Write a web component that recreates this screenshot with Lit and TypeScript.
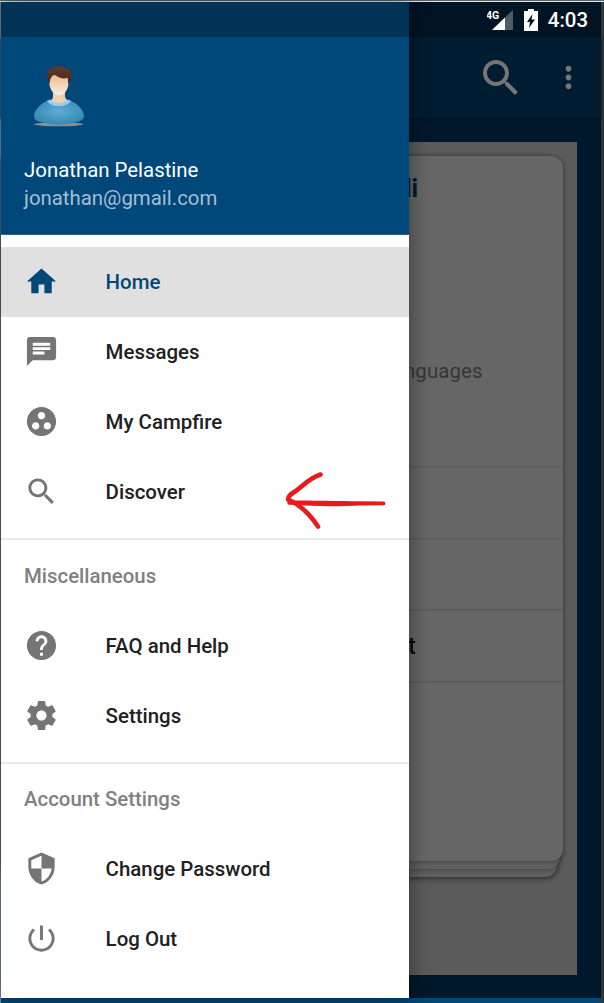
import { LitElement, html, css, svg } from "lit";
import { customElement, property } from "lit/decorators.js";

const ICONS: Record<string, string> = {
  home: "M10 20v-6h4v6h5v-8h3L12 3 2 12h3v8z",
  chat: "M20 2H4c-1.1 0-1.99.9-1.99 2L2 22l4-4h14c1.1 0 2-.9 2-2V4c0-1.1-.9-2-2-2zM6 9h12v2H6V9zm8 5H6v-2h8v2zm4-6H6V6h12v2z",
  group:
    "M12 2C6.48 2 2 6.48 2 12s4.48 10 10 10 10-4.48 10-10S17.52 2 12 2zM8 17.5c-1.38 0-2.5-1.12-2.5-2.5s1.12-2.5 2.5-2.5 2.5 1.12 2.5 2.5-1.12 2.5-2.5 2.5zM9.5 8c0-1.38 1.12-2.5 2.5-2.5s2.5 1.12 2.5 2.5-1.12 2.5-2.5 2.5S9.5 9.38 9.5 8zm6.5 9.5c-1.38 0-2.5-1.12-2.5-2.5s1.12-2.5 2.5-2.5 2.5 1.12 2.5 2.5-1.12 2.5-2.5 2.5z",
  search:
    "M15.5 14h-.79l-.28-.27C15.41 12.59 16 11.11 16 9.5 16 5.91 13.09 3 9.5 3S3 5.91 3 9.5 5.91 16 9.5 16c1.61 0 3.09-.59 4.23-1.57l.27.28v.79l5 4.99L20.49 19l-4.99-5zm-6 0C7.01 14 5 11.99 5 9.5S7.01 5 9.5 5 14 7.01 14 9.5 11.99 14 9.5 14z",
  help: "M12 2C6.48 2 2 6.48 2 12s4.48 10 10 10 10-4.48 10-10S17.52 2 12 2zm1 17h-2v-2h2v2zm2.07-7.75l-.9.92C13.45 12.9 13 13.5 13 15h-2v-.5c0-1.1.45-2.1 1.17-2.83l1.24-1.26c.37-.36.59-.86.59-1.41 0-1.1-.9-2-2-2s-2 .9-2 2H8c0-2.21 1.79-4 4-4s4 1.79 4 4c0 .88-.36 1.68-.93 2.25z",
  settings:
    "M19.43 12.98c.04-.32.07-.64.07-.98s-.03-.66-.07-.98l2.11-1.65c.19-.15.24-.42.12-.64l-2-3.46c-.12-.22-.39-.3-.61-.22l-2.49 1c-.52-.4-1.08-.73-1.69-.98l-.38-2.65C14.46 2.18 14.25 2 14 2h-4c-.25 0-.46.18-.49.42l-.38 2.65c-.61.25-1.17.59-1.69.98l-2.49-1c-.23-.09-.49 0-.61.22l-2 3.46c-.13.22-.07.49.12.64l2.11 1.65c-.04.32-.07.65-.07.98s.03.66.07.98l-2.11 1.65c-.19.15-.24.42-.12.64l2 3.46c.12.22.39.3.61.22l2.49-1c.52.4 1.08.73 1.69.98l.38 2.65c.03.24.24.42.49.42h4c.25 0 .46-.18.49-.42l.38-2.65c.61-.25 1.17-.59 1.69-.98l2.49 1c.23.09.49 0 .61-.22l2-3.46c.12-.22.07-.49-.12-.64l-2.11-1.65zM12 15.5c-1.93 0-3.5-1.57-3.5-3.5s1.57-3.5 3.5-3.5 3.5 1.57 3.5 3.5-1.57 3.5-3.5 3.5z",
  shield:
    "M12 1L3 5v6c0 5.55 3.84 10.74 9 12 5.16-1.26 9-6.45 9-12V5l-9-4zm0 10.99h7c-.53 4.12-3.28 7.79-7 8.94V12H5V6.3l7-3.11v8.8z",
  power:
    "M13 3h-2v10h2V3zm4.83 2.17l-1.42 1.42C17.99 7.86 19 9.81 19 12c0 3.87-3.13 7-7 7s-7-3.13-7-7c0-2.19 1.01-4.14 2.58-5.42L6.17 5.17C4.23 6.82 3 9.26 3 12c0 4.97 4.03 9 9 9s9-4.03 9-9c0-2.74-1.23-5.18-3.17-6.83z",
  more: "M12 8c1.1 0 2-.9 2-2s-.9-2-2-2-2 .9-2 2 .9 2 2 2zm0 2c-1.1 0-2 .9-2 2s.9 2 2 2 2-.9 2-2-.9-2-2-2zm0 6c-1.1 0-2 .9-2 2s.9 2 2 2 2-.9 2-2-.9-2-2-2z",
};

@customElement("md-icon")
class MdIcon extends LitElement {
  @property() name = "";
  static styles = css`
    :host { display: block; width: 35px; height: 35px; flex: none; }
    svg { display: block; width: 100%; height: 100%; fill: currentColor; }
  `;
  render() {
    return html`<svg viewBox="0 0 24 24">${svg`<path d=${ICONS[this.name] ?? ""}></path>`}</svg>`;
  }
}

@customElement("nav-item")
class NavItem extends LitElement {
  @property() icon = "";
  @property() label = "";
  @property({ type: Boolean, reflect: true }) selected = false;
  static styles = css`
    :host {
      display: flex; align-items: center; height: 70px; padding-left: 23px;
      color: #212121; font: 500 20.45px/24px Roboto, sans-serif;
    }
    :host([selected]) { background: #e0e0e0; color: #00477a; }
    md-icon { color: #757575; margin: 0 46.6px 2px 0; }
    :host([selected]) md-icon { color: #00477a; }
  `;
  render() {
    return html`<md-icon name=${this.icon}></md-icon><span>${this.label}</span>`;
  }
}

@customElement("nav-drawer")
class NavDrawer extends LitElement {
  static styles = css`
    :host {
      display: flex; flex-direction: column; box-sizing: border-box;
      background: #fff; font-family: Roboto, sans-serif;
    }
    .header {
      box-sizing: border-box; height: 233px; padding: 61px 23px 0; color: #fff;
      background: linear-gradient(#003356 0 35px, #00477a 35px);
      border-bottom: 1px solid #2d6590; flex: none;
    }
    .avatar { display: block; width: 70px; height: 70px; }
    .name { margin-top: 23px; font-size: 20.4px; line-height: 28px; font-weight: 400; }
    .mail { font-size: 20.4px; line-height: 28px; color: #a4bfd3; }
    .group { padding: 12px 0 11px; }
    .group + .group { border-top: 2px solid #e9e9e9; padding: 0 0 11px; }
    .title { height: 71px; line-height: 72px; padding-left: 23px; font-size: 20.4px; font-weight: 500; color: #808080; }
    .group:last-child .title { height: 70px; line-height: 71px; }
  `;
  render() {
    return html`
      <div class="header">
        <svg class="avatar" viewBox="0 0 70 70">
          <defs>
            <linearGradient id="face" x1="0" y1="0" x2="0" y2="1"><stop offset="0" stop-color="#e9b47c" /><stop offset="1" stop-color="#f9eee2" /></linearGradient>
            <radialGradient id="shirt" cx=".5" cy=".45" r=".6"><stop offset="0" stop-color="#60acd8" /><stop offset="1" stop-color="#3088ae" /></radialGradient>
            <linearGradient id="hair" x1="0" y1="0" x2="0" y2="1"><stop offset="0" stop-color="#5f3b28" /><stop offset="1" stop-color="#48281f" /></linearGradient>
          </defs>
          <ellipse cx="34.7" cy="61.3" rx="24.5" ry="2" fill="#8f8f94" />
          <path d="M29 29h12v5c1 2 2 3 4 4l-5 4H30l-5-4c2-1 4-2 4-4z" fill="#f0cfa9" />
          <path d="M25.5 37C18 39.500 10 46 10 53.500c0 3.500 4 5 9 6.300 9 2.500 22 2.500 31 0 6-1.500 10-3 10-6.300C60 46 52 39.500 44.500 37c-4.500 5-14.500 5-19 0z" fill="url(#shirt)" />
          <path d="M26 36.500l-3 1.500c5 7 19 7 24 0l-3-1.500c-4.500 5-13.500 5-18 0z" fill="#8fd0fa" />
          <path d="M25.300 12c4-5 15-5 19.200 1v8c-1 7-5 11.500-9.500 11.500S26.500 28 25.300 21z" fill="url(#face)" />
          <path d="M25.800 20.500c-3-4-3.800-9.500-1-14C29 2.500 41 2.500 45.500 6.500c3.500 4 2.500 10-1.200 14.500l-.6-6c-5 1-8.200.2-12.700-3-3 0-5 3-5.200 8.500z" fill="url(#hair)" />
        </svg>
        <div class="name">Jonathan Pelastine</div>
        <div class="mail">jonathan@gmail.com</div>
      </div>
      <div class="group">
        <nav-item icon="home" label="Home" selected></nav-item>
        <nav-item icon="chat" label="Messages"></nav-item>
        <nav-item icon="group" label="My Campfire"></nav-item>
        <nav-item icon="search" label="Discover"></nav-item>
      </div>
      <div class="group">
        <div class="title">Miscellaneous</div>
        <nav-item icon="help" label="FAQ and Help"></nav-item>
        <nav-item icon="settings" label="Settings"></nav-item>
      </div>
      <div class="group">
        <div class="title">Account Settings</div>
        <nav-item icon="shield" label="Change Password"></nav-item>
        <nav-item icon="power" label="Log Out"></nav-item>
      </div>
    `;
  }
}

@customElement("app-root")
class AppRoot extends LitElement {
  static styles = css`
    :host {
      display: flex; flex-direction: column; position: relative; box-sizing: border-box;
      width: 604px; height: 1003px; overflow: hidden; padding: 2px 3px 0 1px;
      background: linear-gradient(#5c6468 0 1px, #dfe6ea 1px 2px, transparent 2px),
        linear-gradient(90deg, #72879b 0 1px, #00182b 1px 601px, #353535 601px);
      font-family: Roboto, sans-serif;
    }
    .status {
      display: flex; align-items: center; justify-content: flex-end; box-sizing: border-box;
      height: 35px; padding-right: 13px; background: #001424; color: #fff; font: 500 20.4px/36px Roboto, sans-serif;
    }
    .signal { width: 26px; height: 24px; margin-right: 11px; }
    .battery { width: 14px; height: 22px; margin-right: 10px; }
    .net { font: 700 10.5px Roboto, sans-serif; fill: #fff; }
    .toolbar {
      display: flex; align-items: center; justify-content: flex-end; height: 81px; gap: 26px; padding-right: 15px;
      background: #001c30; color: #757575; box-shadow: 0 1px 3px #00101c;
    }
    .toolbar .find { width: 48px; height: 48px; }
    .page { flex: 1; box-sizing: border-box; padding: 24px 24px 22.5px 0; }
    .panel { box-sizing: border-box; height: 833px; background: #5b5b5b; padding: 14px 14.5px 0 0; }
    .stack { display: grid; height: 721px; }
    .card { grid-area: 1 / 1; background: #666; border-radius: 0 12px 12px 0; box-shadow: 1px 1px 4px rgba(0, 0, 0, 0.3); }
    .back { margin-right: 6px; background: #606060; box-shadow: 1px 2px 5px rgba(0, 0, 0, 0.45); }
    .mid { margin: 0 3px 8px 0; background: #606060; }
    .front { margin-bottom: 16px; display: flex; flex-direction: column; }
    .row { box-sizing: border-box; height: 71.7px; border-bottom: 2px solid #5d5d5d; padding-left: 407px; font: 500 23px/72px Roboto, sans-serif; color: #080808; }
    .intro { height: 312px; padding: 17px 0 0 404px; line-height: 32px; }
    .heading { font-size: 25px; font-weight: 700; color: #001a2e; }
    .sub { margin-top: 150px; font-size: 20.4px; font-weight: 400; color: #363636; margin-left: -6px; letter-spacing: 0.1px; }
    .sub span { margin-left: 5px; }
    nav-drawer { position: absolute; left: 1px; top: 2px; width: 408px; height: 996px; box-shadow: 0 0 20px rgba(0, 0, 0, 0.45); }
    .base { height: 5px; background: #00477a; position: relative; }
    .arrow { position: absolute; left: 280px; top: 466px; width: 110px; height: 70px; }
  `;
  render() {
    return html`
      <div class="status">
        <svg class="signal" viewBox="0 0 26 24">
          <path d="M26 2v20H5z" fill="#4d5b66" /><path d="M18 9.600V22H5z" fill="#fff" />
          <text class="net" x="-1" y="10.500">4G</text>
        </svg>
        <svg class="battery" viewBox="0 0 14 22">
          <path d="M4 0h6v2h4v20H0V2h4z" fill="#fff" /><path d="M8.500 5L3 13h3l-1 6 6-8.500H7.500z" fill="#001424" />
        </svg>
        <span>4:03</span>
      </div>
      <div class="toolbar">
        <md-icon class="find" name="search"></md-icon>
        <md-icon name="more"></md-icon>
      </div>
      <div class="page">
        <div class="panel">
          <div class="stack">
            <div class="card back"></div>
            <div class="card mid"></div>
            <div class="card front">
              <div class="row intro"><div class="heading">li</div><div class="sub"><span>nguages</span></div></div>
              <div class="row"></div>
              <div class="row"></div>
              <div class="row">t</div>
            </div>
          </div>
        </div>
      </div>
      <div class="base"></div>
      <nav-drawer></nav-drawer>
      <svg class="arrow" viewBox="0 0 110 70">
        <path d="M40.500 8.500C29 12 22 21 15 25.500 11 28 8 30 8 33.500c12 5 22 15 30 27" fill="none" stroke="#e9191c" stroke-width="4.600" stroke-linecap="round" stroke-linejoin="round" />
        <path d="M9 34.500C30 34.500 60 35 80 35.300l23.500.2a1.900 1.900 0 0 1 0 3.800L80 39.500c-20 1-45 1-71-.7a2.200 2.200 0 0 1 0-4.300z" fill="#e9191c" />
      </svg>
    `;
  }
}
